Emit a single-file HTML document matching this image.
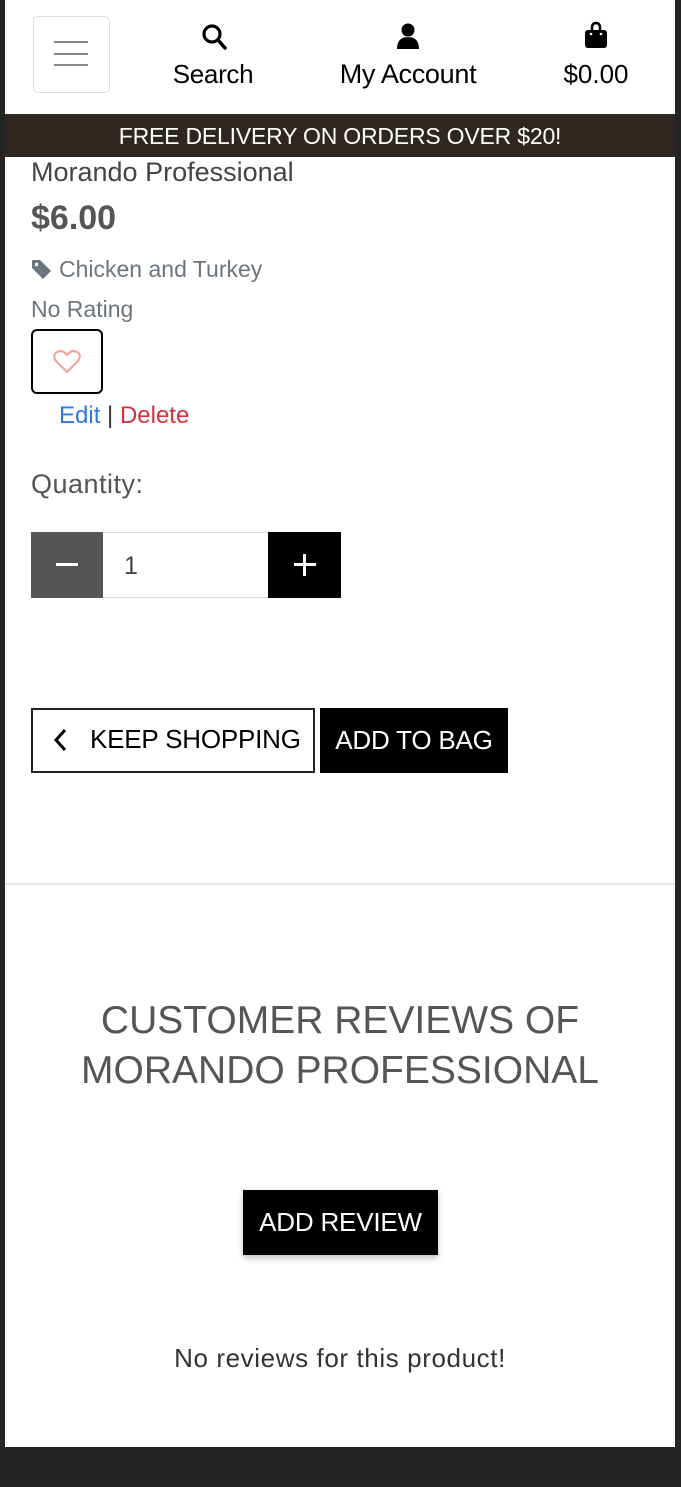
<!DOCTYPE html>
<html><head><meta charset="utf-8"><style>
*{margin:0;padding:0;box-sizing:border-box}
html,body{width:681px;height:1487px;background:#242424;font-family:"Liberation Sans",sans-serif;overflow:hidden}
.page{position:absolute;left:5px;top:0;width:670px;height:1447px;background:#fff}
.a{position:absolute;white-space:nowrap}
.nav{font-size:26px;color:#000;text-align:center}
</style></head><body>
<div class="page"></div>
<div class="a" style="left:33px;top:16px;width:77px;height:77px;border:1px solid #ddd;border-radius:5px"></div>
<div class="a" style="left:54px;top:41px;width:34px;height:2px;background:#888"></div>
<div class="a" style="left:54px;top:53px;width:34px;height:2px;background:#888"></div>
<div class="a" style="left:54px;top:64px;width:34px;height:2px;background:#888"></div>
<svg class="a" style="left:200px;top:23px" width="28" height="28" viewBox="0 0 28 28"><circle cx="12" cy="11" r="8" fill="none" stroke="#000" stroke-width="3.2"/><line x1="18" y1="17" x2="25" y2="25" stroke="#000" stroke-width="3.5" stroke-linecap="round"/></svg>
<div class="a nav" style="left:153px;top:59px;width:120px;letter-spacing:-0.3px">Search</div>
<svg class="a" style="left:394px;top:22px" width="28" height="28" viewBox="0 0 28 28"><circle cx="14" cy="8" r="6.5"/><path d="M3 27 Q3 15 14 15 Q25 15 25 27Z"/></svg>
<div class="a nav" style="left:318px;top:59px;width:180px;font-size:27px;letter-spacing:-0.3px">My Account</div>
<svg class="a" style="left:583px;top:21px" width="26" height="28" viewBox="0 0 26 28"><path d="M9 10 V7 Q9 2 13 2 Q17 2 17 7 V10" fill="none" stroke="#000" stroke-width="2.5"/><rect x="2" y="9" width="22" height="18" rx="3"/><circle cx="8" cy="13" r="1.3" fill="#fff"/><circle cx="18" cy="13" r="1.3" fill="#fff"/></svg>
<div class="a nav" style="left:546px;top:59px;width:100px">$0.00</div>
<div class="a" style="left:5px;top:114px;width:670px;height:43px;background:#302621;color:#fff;font-size:23px;letter-spacing:-0.2px;text-align:center;line-height:44px">FREE DELIVERY ON ORDERS OVER $20!</div>
<div class="a" style="left:31px;top:157px;font-size:27px;color:#444">Morando Professional</div>
<div class="a" style="left:31px;top:199px;font-size:34px;color:#555;font-weight:bold">$6.00</div>
<svg class="a" style="left:31px;top:259px" width="21" height="21" viewBox="0 0 21 21"><path d="M1 2 Q1 1 2 1 H9 L20 12 L12 20 L1 9Z" fill="#6c757d"/><circle cx="5.5" cy="5.5" r="1.7" fill="#fff"/></svg>
<div class="a" style="left:59px;top:256px;font-size:23px;color:#6c757d">Chicken and Turkey</div>
<div class="a" style="left:31px;top:296px;font-size:23px;color:#6c757d">No Rating</div>
<div class="a" style="left:31px;top:329px;width:72px;height:65px;border:2px solid #000;border-radius:6px"></div>
<svg class="a" style="left:53px;top:349px" width="28" height="26" viewBox="0 0 28 26"><path d="M14 23 L3 12 Q-1 6 4 3 Q9 0 14 6 Q19 0 24 3 Q29 6 25 12Z" fill="none" stroke="#f4a59c" stroke-width="2.2" stroke-linejoin="round"/></svg>
<div class="a" style="left:59px;top:402px;font-size:24px"><span style="color:#2a7ae2">Edit</span><span style="color:#333"> | </span><span style="color:#d0313d">Delete</span></div>
<div class="a" style="left:31px;top:469px;font-size:27px;color:#555;letter-spacing:0.5px">Quantity:</div>
<div class="a" style="left:31px;top:532px;width:310px;height:66px;border:1px solid #ddd"></div>
<div class="a" style="left:31px;top:532px;width:72px;height:66px;background:#555"></div>
<div class="a" style="left:56px;top:563px;width:22px;height:3px;background:#fff"></div>
<div class="a" style="left:268px;top:532px;width:73px;height:66px;background:#000"></div>
<div class="a" style="left:294px;top:563px;width:22px;height:3px;background:#fff"></div>
<div class="a" style="left:303px;top:554px;width:3px;height:22px;background:#fff"></div>
<div class="a" style="left:124px;top:552px;font-size:25px;color:#444">1</div>
<div class="a" style="left:31px;top:708px;width:284px;height:65px;border:2px solid #222"></div>
<svg class="a" style="left:53px;top:728px" width="16" height="24" viewBox="0 0 16 24"><path d="M12 2 L3 12 L12 22" fill="none" stroke="#000" stroke-width="3"/></svg>
<div class="a" style="left:90px;top:724px;font-size:26px;color:#000;letter-spacing:-0.2px">KEEP SHOPPING</div>
<div class="a" style="left:320px;top:708px;width:188px;height:65px;background:#000;color:#fff;font-size:26px;letter-spacing:-0.2px;text-align:center;line-height:65px">ADD TO BAG</div>
<div class="a" style="left:5px;top:883px;width:670px;height:2px;background:#e5e5e5"></div>
<div class="a" style="left:5px;top:996px;width:670px;text-align:center;font-size:39px;color:#555;line-height:50px;white-space:normal">CUSTOMER REVIEWS OF<br>MORANDO PROFESSIONAL</div>
<div class="a" style="left:243px;top:1190px;width:195px;height:65px;background:#000;color:#fff;font-size:26px;letter-spacing:-0.2px;text-align:center;line-height:65px;box-shadow:0 3px 6px rgba(0,0,0,.25)">ADD REVIEW</div>
<div class="a" style="left:5px;top:1343px;width:670px;text-align:center;font-size:26px;color:#333;letter-spacing:0.6px">No reviews for this product!</div>
</body></html>
